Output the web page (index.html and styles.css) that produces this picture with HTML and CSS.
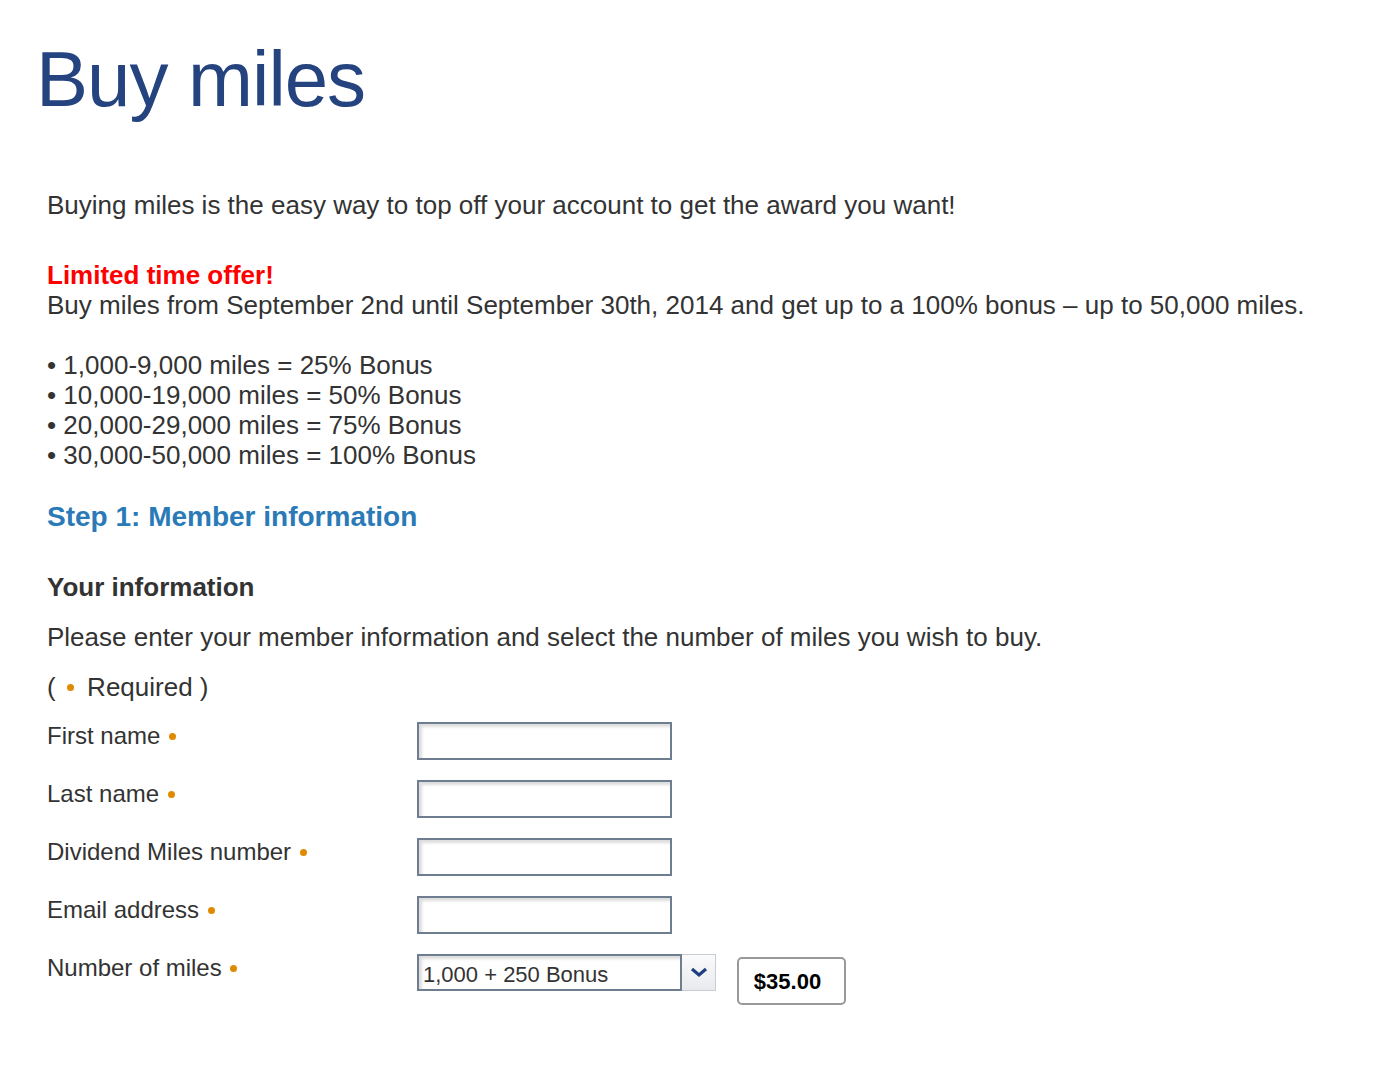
FILE: index.html
```html
<!DOCTYPE html>
<html lang="en">
<head>
    <meta charset="UTF-8">
    <title>Buy miles</title>
    <link rel="stylesheet" href="styles.css">
</head>
<body>

    <h1 class="page-title">Buy miles</h1>

    <div class="content">
        <p class="intro">Buying miles is the easy way to top off your account to get the award you want!</p>

        <!-- Promo -->
        <div class="promo">
            <div class="promo-title">Limited time offer!</div>
            <div>Buy miles from September 2nd until September 30th, 2014 and get up to a 100% bonus &ndash; up to 50,000 miles.</div>
        </div>

        <ul class="bonus-list">
            <li>&bull; 1,000-9,000 miles = 25% Bonus</li>
            <li>&bull; 10,000-19,000 miles = 50% Bonus</li>
            <li>&bull; 20,000-29,000 miles = 75% Bonus</li>
            <li>&bull; 30,000-50,000 miles = 100% Bonus</li>
        </ul>

        <h2 class="step">Step 1: Member information</h2>

        <h3 class="section-title">Your information</h3>
        <p class="note">Please enter your member information and select the number of miles you wish to buy.</p>
        <p class="required-note">( <span class="req"></span> Required )</p>

        <!-- Form -->
        <form class="member-form">
            <div class="form-row">
                <label for="firstName">First name <span class="req"></span></label>
                <input type="text" id="firstName">
            </div>
            <div class="form-row">
                <label for="lastName">Last name <span class="req"></span></label>
                <input type="text" id="lastName">
            </div>
            <div class="form-row">
                <label for="dmNumber">Dividend Miles number <span class="req"></span></label>
                <input type="text" id="dmNumber">
            </div>
            <div class="form-row">
                <label for="email">Email address <span class="req"></span></label>
                <input type="text" id="email">
            </div>
            <div class="form-row">
                <label for="miles">Number of miles <span class="req"></span></label>
                <div class="select-wrap">
                    <div class="select-value" id="miles">1,000 + 250 Bonus</div>
                    <div class="select-arrow">
                        <svg width="18" height="12" viewBox="0 0 18 12"><path d="M2 2 L9 8 L16 2" fill="none" stroke="#1f3f80" stroke-width="3.2"/></svg>
                    </div>
                </div>
                <div class="price">$35.00</div>
            </div>
        </form>
    </div>

</body>
</html>
```

FILE: styles.css
```css
body {
    margin: 0;
    font-family: "Liberation Sans", Arial, sans-serif;
    color: #333;
    background: #fff;
}

.page-title {
    margin: 0;
    padding: 31px 0 0 36px;
    font-family: "Liberation Sans", Arial, sans-serif;
    font-weight: normal;
    font-size: 78px;
    line-height: 96px;
    color: #25437f;
    letter-spacing: -1px;
}

.content {
    padding: 63px 0 0 47px;
    font-size: 26px;
    line-height: 30px;
}

.intro {
    margin: 0 0 40px;
}

.promo-title {
    color: #f00;
    font-weight: bold;
}

.promo {
    margin-bottom: 30px;
}

.bonus-list {
    list-style: none;
    margin: 0;
    padding: 0;
}

.step {
    margin: 30px 0 0;
    font-size: 28px;
    line-height: 34px;
    color: #2a7ab8;
}

.section-title {
    margin: 36px 0 0;
    font-size: 26px;
    line-height: 34px;
}

.note {
    margin: 18px 0 0;
}

.required-note {
    margin: 20px 0 0;
}

/* Required marker */
.req {
    display: inline-block;
    width: 7px;
    height: 7px;
    border-radius: 50%;
    background: #e08a00;
    vertical-align: middle;
    margin: 0 6px 3px 4px;
}

.member-form {
    margin-top: 16px;
}

.form-row {
    display: flex;
    align-items: flex-start;
    height: 58px;
}

.form-row label {
    width: 370px;
    flex-shrink: 0;
    font-size: 24px;
    line-height: 32px;
    padding-top: 2px;
}

.form-row label .req {
    margin-left: 2px;
}

input[type="text"] {
    box-sizing: border-box;
    width: 255px;
    height: 38px;
    margin: 4px 0 0;
    border: 2px solid #6e7d90;
    box-shadow: inset 3px 3px 3px #ddd;
    font-size: 20px;
    padding: 0 6px;
}

.select-wrap {
    display: flex;
    margin-top: 4px;
    height: 37px;
    width: 299px;
    box-sizing: border-box;
    border: 1px solid #c8cdd4;
}

.select-value {
    flex: 1;
    border: 2px solid #6e7d90;
    margin: -1px 0 -1px -1px;
    box-shadow: inset 3px 3px 3px #ddd;
    padding: 2px 4px 0;
    line-height: 33px;
    font-size: 22px;
    color: #333;
}

.select-arrow {
    width: 33px;
    display: flex;
    align-items: center;
    justify-content: center;
    background: linear-gradient(#fafafa, #e8eaee);
}

.price {
    box-sizing: border-box;
    margin: 7px 0 0 21px;
    width: 109px;
    height: 48px;
    padding: 2px 8px 0 0;
    border: 2px solid #999;
    border-radius: 5px;
    font-weight: bold;
    font-size: 22px;
    line-height: 42px;
    text-align: center;
    color: #000;
}
```
